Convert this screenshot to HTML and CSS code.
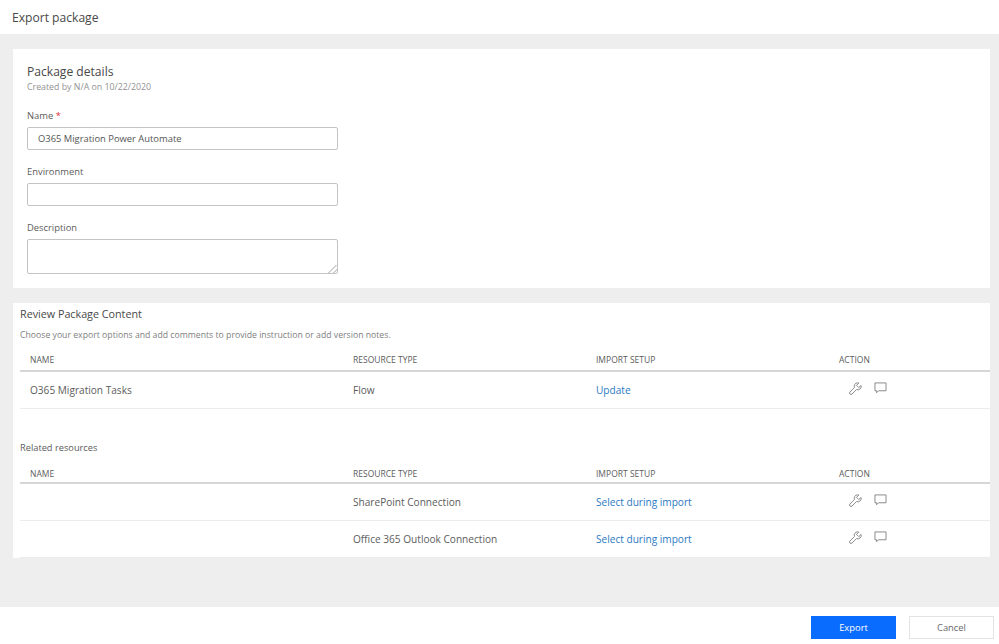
FILE: index.html
```html
<!DOCTYPE html>
<html lang="en">
<head>
<meta charset="utf-8">
<title>Export package</title>
<link rel="stylesheet" href="styles.css">
</head>
<body>
<svg class="defs" width="0" height="0" aria-hidden="true">
  <symbol id="wrench" viewBox="0 0 14 14">
    <path d="M9.2 .9a3.6 3.6 0 0 0-3.3 5L1 10.8a1.5 1.500 0 0 0 0 2.100l.1.1a1.500 1.500 0 0 0 2.100 0L8.100 8.100a3.600 3.600 0 0 0 4.900-4.400l-2.500 2.400-2.400-2.400L10.500 1.100A3.600 3.600 0 0 0 9.200 .9z" fill="none" stroke="currentColor" stroke-width=".9" stroke-linejoin="round"/>
  </symbol>
  <symbol id="comment" viewBox="0 0 14 13">
    <path d="M1 1h12v8.500H4.800L2.800 11.600V9.500H1z" fill="none" stroke="currentColor" stroke-width=".9"/>
  </symbol>
</svg>
<div class="page">
  <header class="top"><h1>Export package</h1></header>
  <main class="content">
    <section class="card details">
      <h2>Package details</h2>
      <p class="meta">Created by N/A on 10/22/2020</p>
      <label class="field">
        <span class="label">Name <em>*</em></span>
        <input class="input" type="text" value="O365 Migration Power Automate">
      </label>
      <label class="field">
        <span class="label">Environment</span>
        <input class="input" type="text">
      </label>
      <label class="field">
        <span class="label">Description</span>
        <textarea class="input area"></textarea>
      </label>
    </section>
    <section class="card review">
      <h3>Review Package Content</h3>
      <p class="hint">Choose your export options and add comments to provide instruction or add version notes.</p>
      <div class="row head">
        <span>NAME</span><span>RESOURCE TYPE</span><span>IMPORT SETUP</span><span>ACTION</span>
      </div>
      <div class="row item">
        <span>O365 Migration Tasks</span><span>Flow</span><a href="#">Update</a>
        <span class="actions"><svg class="wrench"><use href="#wrench"/></svg><svg class="comment"><use href="#comment"/></svg></span>
      </div>
      <h4>Related resources</h4>
      <div class="row head">
        <span>NAME</span><span>RESOURCE TYPE</span><span>IMPORT SETUP</span><span>ACTION</span>
      </div>
      <div class="row item">
        <span></span><span>SharePoint Connection</span><a href="#">Select during import</a>
        <span class="actions"><svg class="wrench"><use href="#wrench"/></svg><svg class="comment"><use href="#comment"/></svg></span>
      </div>
      <div class="row item">
        <span></span><span>Office 365 Outlook Connection</span><a href="#">Select during import</a>
        <span class="actions"><svg class="wrench"><use href="#wrench"/></svg><svg class="comment"><use href="#comment"/></svg></span>
      </div>
    </section>
  </main>
  <footer class="bottom">
    <button class="btn primary" type="button">Export</button>
    <button class="btn" type="button">Cancel</button>
  </footer>
</div>
</body>
</html>
```

FILE: styles.css
```css
* { box-sizing: border-box; }
html, body { margin: 0; height: 100%; }
body {
  font-family: "Open Sans", "Noto Sans", "Liberation Sans", sans-serif;
  color: #444;
  background: #fff;
  overflow: hidden;
}
.defs { position: absolute; }
.page { width: 999px; height: 644px; display: flex; flex-direction: column; }
.top { height: 34px; padding: 9px 0 0 12px; background: #fff; }
h1 { margin: 0; font-size: 12.1px; line-height: 17px; font-weight: 400; color: #484848; }
.content {
  flex: 1;
  background: #eeeeee;
  padding: 15px 9px 0 13px;
  display: flex;
  flex-direction: column;
  gap: 15px;
}
.card { background: #fff; }
.details { height: 239px; padding: 14px 14px 0; }
h2 { margin: 0; font-size: 12.1px; line-height: 18px; font-weight: 400; color: #484848; }
.meta { margin: 0 0 16px; font-size: 8.8px; line-height: 12px; color: #929292; }
.field { display: block; margin-bottom: 15px; }
.label { display: block; font-size: 9.4px; line-height: 14px; height: 18px; color: #5c5c5c; }
.label em { font-style: normal; color: #e0303a; }
.input {
  display: block;
  width: 311px;
  height: 23px;
  padding: 0 10px;
  border: 1px solid #c4c4c4;
  border-radius: 2px;
  background: #fff;
  font: inherit;
  font-size: 9.4px;
  color: #555;
  outline: none;
}
.area {
  height: 35px;
  resize: none;
  background-image: linear-gradient(135deg, transparent 50%, #d0d0d0 50%, #d0d0d0 60%, transparent 60%, transparent 75%, #d0d0d0 75%, #d0d0d0 85%, transparent 85%);
  background-size: 9px 9px;
  background-position: right bottom;
  background-repeat: no-repeat;
}
.review { height: 255px; padding: 3px 0 0 7px; }
h3 { margin: 0; font-size: 10.75px; line-height: 16px; font-weight: 400; color: #484848; }
.hint { margin: 7px 0 0; font-size: 8.7px; line-height: 13px; color: #808080; }
h4 { margin: 0; padding-top: 32px; height: 57px; font-size: 9.25px; line-height: 14px; font-weight: 400; color: #5c5c5c; }
.row {
  display: grid;
  grid-template-columns: 323px 243px 243px 1fr;
  align-items: center;
  padding-left: 10px;
}
.head {
  height: 22px;
  margin-top: 8px;
  border-bottom: 2px solid #d6d6d6;
  font-size: 8.5px;
  line-height: 12px;
  color: #5c5c5c;
}
h4 + .head { margin-top: 0; height: 18px; }
.item {
  height: 37px;
  border-bottom: 1px solid #ececec;
  font-size: 10.1px;
  color: #5c5c5c;
}
.item a { color: #2b79c2; text-decoration: none; }
.actions { display: flex; align-items: center; gap: 12px; padding: 0 0 4px 10px; }
.wrench { width: 13px; height: 13px; color: #747474; }
.comment { width: 13px; height: 12px; color: #747474; }
.bottom {
  height: 37px;
  background: #fff;
  display: flex;
  justify-content: flex-end;
  gap: 13px;
  padding: 9px 5px 0 0;
}
.btn {
  width: 85px;
  height: 23px;
  border: 1px solid #e3e3e3;
  background: #fff;
  color: #6a6a6a;
  font: inherit;
  font-size: 9.4px;
  padding: 0;
}
.primary { background: #0a6cff; border-color: #0a6cff; color: #fff; }
```
